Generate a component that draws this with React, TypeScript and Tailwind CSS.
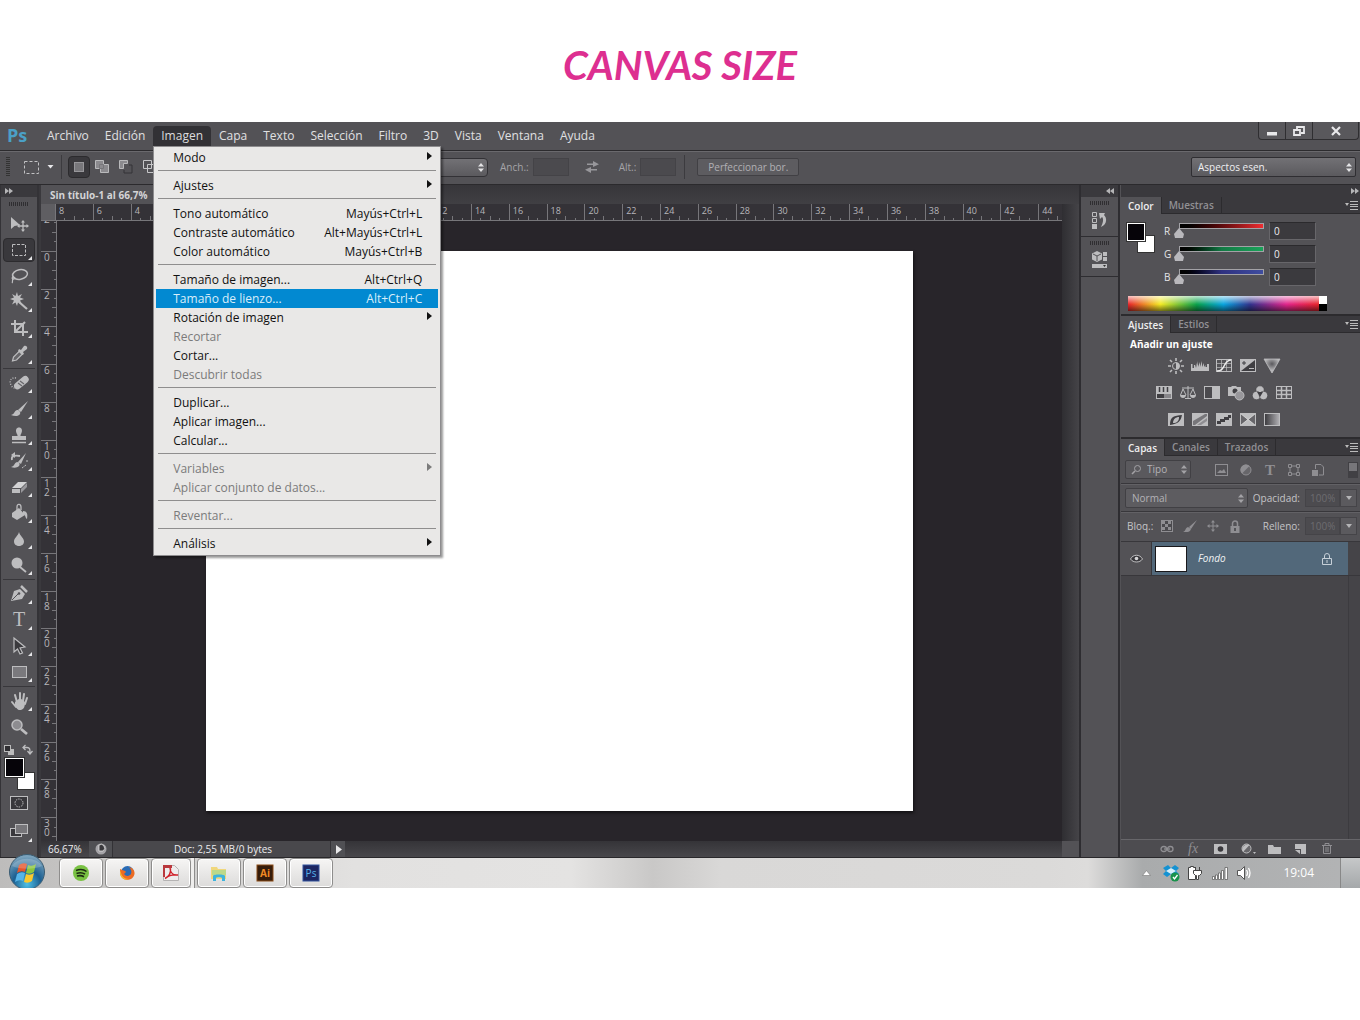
import React from "react";

const FONT = "font-['Open_Sans','Noto_Sans',sans-serif]";

type MenuRow =
  | { sep: true }
  | { sep?: false; label: string; keys?: string; sub?: boolean; off?: boolean; hot?: boolean };

const imageMenu: MenuRow[] = [
  { label: "Modo", sub: true },
  { sep: true },
  { label: "Ajustes", sub: true },
  { sep: true },
  { label: "Tono automático", keys: "Mayús+Ctrl+L" },
  { label: "Contraste automático", keys: "Alt+Mayús+Ctrl+L" },
  { label: "Color automático", keys: "Mayús+Ctrl+B" },
  { sep: true },
  { label: "Tamaño de imagen...", keys: "Alt+Ctrl+Q" },
  { label: "Tamaño de lienzo...", keys: "Alt+Ctrl+C", hot: true },
  { label: "Rotación de imagen", sub: true },
  { label: "Recortar", off: true },
  { label: "Cortar..." },
  { label: "Descubrir todas", off: true },
  { sep: true },
  { label: "Duplicar..." },
  { label: "Aplicar imagen..." },
  { label: "Calcular..." },
  { sep: true },
  { label: "Variables", sub: true, off: true },
  { label: "Aplicar conjunto de datos...", off: true },
  { sep: true },
  { label: "Reventar...", off: true },
  { sep: true },
  { label: "Análisis", sub: true },
];

function ImageMenu() {
  return (
    <div
      role="menu"
      className="absolute left-0 top-full z-30 -mt-px w-72 border border-[#8d8c8e] bg-[#e9e8e7] px-0.5 pb-0.5 pt-px shadow-[2px_2px_2px_#0006]"
    >
      {imageMenu.map((r, i) =>
        r.sep ? (
          <div key={i} className="h-[9px] px-0.5 pt-[3px]">
            <div className="h-px bg-[#8f8e8e]" />
          </div>
        ) : (
          <button
            key={i}
            role="menuitem"
            disabled={r.off}
            className={
              "flex h-[19px] w-full items-center justify-between pl-[17px] text-xs leading-[18px] whitespace-nowrap " +
              (r.hot ? "bg-[#0289d1] text-[#d9eefa]" : r.off ? "text-[#7b7b7b]" : "text-[#111]") +
              (r.sub ? " pr-1.5" : " pr-4")
            }
          >
            <span>{r.label}</span>
            {r.keys && <span>{r.keys}</span>}
            {r.sub && (
              <svg width="5" height="8" viewBox="0 0 5 8" className="-mt-1" fill="currentColor">
                <path d="M0 0L5 4L0 8Z" />
              </svg>
            )}
          </button>
        ),
      )}
    </div>
  );
}

const menus = ["Archivo", "Edición", "Imagen", "Capa", "Texto", "Selección", "Filtro", "3D", "Vista", "Ventana", "Ayuda"];

function MenuBar() {
  return (
    <header className="flex h-[29px] items-stretch border-b border-[#2c2b2e] bg-[#535256]">
      <div className="w-[39px] pl-[7px] font-['Open_Sans',sans-serif] text-lg font-bold leading-[27px] text-[#4ba0c6]">Ps</div>
      <nav className="flex h-[25px] items-stretch pt-1 text-xs text-[#e0e0e2]">
        {menus.map((m) => (
          <div key={m} className="relative flex">
            <button
              className={
                "h-5 rounded-t-sm px-2 leading-5 " + (m === "Imagen" ? "bg-[#323135] text-[#dcdcde]" : "")
              }
            >
              {m}
            </button>
            {m === "Imagen" && <ImageMenu />}
          </div>
        ))}
      </nav>
      <div className="ml-auto mr-px flex h-[18px] rounded-b-sm border border-t-0 border-[#2f2e31] bg-[#59585c] text-[#e8e8ea]">
        <button aria-label="Minimizar" className="flex w-[27px] items-center justify-center border-r border-[#2f2e31]">
          <svg width="12" height="12" viewBox="0 0 12 12"><path d="M1 7h10v3.500H1z" fill="currentColor" /></svg>
        </button>
        <button aria-label="Restaurar" className="flex w-[27px] items-center justify-center border-r border-[#2f2e31]">
          <svg width="14" height="12" viewBox="0 0 14 12" fill="none" stroke="currentColor" strokeWidth="1.800">
            <path d="M5 4V2h7v6H9M2 5h6v5H2z" />
          </svg>
        </button>
        <button aria-label="Cerrar" className="flex w-[45px] items-center justify-center">
          <svg width="12" height="12" viewBox="0 0 12 12" stroke="currentColor" strokeWidth="2.200">
            <path d="M2 2l8 8M10 2l-8 8" />
          </svg>
        </button>
      </div>
    </header>
  );
}

function UpDown({ className = "" }: { className?: string }) {
  return (
    <svg width="6" height="9" viewBox="0 0 6 9" fill="currentColor" className={"pointer-events-none absolute " + className}>
      <path d="M3 0L6 3.500H0zM0 5.500h6L3 9z" />
    </svg>
  );
}

function Grip() {
  return <div className="h-1 w-5 bg-[repeating-linear-gradient(90deg,#2f2e31_0_1px,transparent_1px_2px)]" />;
}

function OptionsBar() {
  const small = "text-[10px] text-[#a5a4a8]";
  return (
    <div className="flex h-[34px] items-center border-b border-[#2b2a2d] border-t border-t-[#6a696d] bg-[#535256] pb-0.5">
      <div className="ml-1.5 h-5 w-1 bg-[repeating-linear-gradient(180deg,#333_0_1px,transparent_1px_2px)]" />
      <button aria-label="Herramienta marco" className="ml-3.5 flex items-center gap-2">
        <svg width="15" height="13" viewBox="0 0 15 13" fill="none" stroke="#c2c2c4">
          <rect x=".5" y=".5" width="14" height="12" strokeDasharray="3 2" />
        </svg>
        <svg width="7" height="4" viewBox="0 0 7 4" fill="#e8e8ea"><path d="M.5 0h6l-3 3.500z" /></svg>
      </button>
      <div className="ml-[7px] h-6 w-px bg-[#3c3b3f]" />
      <button aria-label="Nueva selección" className="ml-1.5 flex h-[22px] w-[22px] items-center justify-center rounded-sm border border-[#2c2b2e] bg-[#3a393d]">
        <svg width="10" height="10" viewBox="0 0 10 10"><rect x=".5" y=".5" width="9" height="9" fill="#78777b" stroke="#98979b" /></svg>
      </button>
      <button aria-label="Añadir" className="ml-[5px]">
        <svg width="14" height="14" viewBox="0 0 14 14" fill="#8b8a8e" stroke="#b9b9bb"><path d="M.5.5h8v4h5v8h-8v-4h-5z" /><path d="M4.500 4.500h4v4h-4z" stroke="#77767a" /></svg>
      </button>
      <button aria-label="Restar" className="ml-2.5">
        <svg width="14" height="14" viewBox="0 0 14 14" fill="none"><path d="M.5.5h8v3h-4v5h-4z" fill="#8b8a8e" stroke="#b9b9bb" /><path d="M10 5h3v8H5v-3" stroke="#343337" /></svg>
      </button>
      <button aria-label="Formar intersección" className="ml-2.5">
        <svg width="14" height="14" viewBox="0 0 14 14" fill="none" stroke="#c6c6c8"><path d="M.5.5h8v8h-8zM4.500 4.500h8v8h-8z" /></svg>
      </button>
      <label className="relative ml-[206px] flex items-center">
        <select aria-label="Estilo" className="h-[19px] w-[125px] appearance-none rounded-sm border border-[#333236] bg-linear-to-b from-[#727175] to-[#5b5a5e] pl-2 text-[10px] text-[#ddd]">
          <option>Normal</option>
        </select>
        <UpDown className="right-1 text-[#e4e4e6]" />
      </label>
      <label className={"ml-3 flex items-center gap-1 " + small}>
        Anch.:
        <input disabled className="h-[18px] w-9 border border-[#444347] bg-[#4b4a4e]" />
      </label>
      <button aria-label="Intercambiar" className="ml-4">
        <svg width="14" height="12" viewBox="0 0 14 12" fill="#98979b"><path d="M2 2.500h6V0l6 3.200-6 2.800V4H2zM12 8H6V6L0 8.800 6 12V9.500h6z" /></svg>
      </button>
      <label className={"ml-5 flex items-center gap-1 " + small}>
        Alt.:
        <input disabled className="h-[18px] w-9 border border-[#444347] bg-[#4b4a4e]" />
      </label>
      <div className="ml-2 h-6 w-px bg-[#3c3b3f]" />
      <button className="ml-3 h-[18px] w-[102px] rounded-xs border border-[#414044] bg-[#5d5c60] text-[10px] leading-4 text-[#b1b0b4] whitespace-nowrap">
        Perfeccionar bor.
      </button>
      <label className="relative ml-auto mr-1 flex items-center">
        <select aria-label="Espacio de trabajo" className="h-5 w-[165px] appearance-none rounded-xs border border-[#2f2e32] bg-linear-to-b from-[#727175] to-[#5b5a5e] pl-1.5 text-[10px] text-[#f0f0f2]">
          <option>Aspectos esen.</option>
        </select>
        <UpDown className="right-1 text-[#e4e4e6]" />
      </label>
    </div>
  );
}

/* ---------- Tool palette ---------- */

const C = "#bdbdbf";
const toolGroups: { name: string; on?: boolean; single?: boolean; art: React.ReactNode }[][] = [
  [
    { name: "Mover", single: true, art: <><path d="M2 3v12l3.500-3 5.500-1z" fill={C} /><path d="M14 7v10M9 12h10" stroke={C} strokeWidth="1.300" /><path d="M14 6l2 2.500h-4zM14 18l2-2.500h-4zM8 12l2.500-2v4zM20 12l-2.500-2v4z" fill={C} /></> },
    { name: "Marco", on: true, art: <rect x="3.500" y="4.500" width="13" height="11" fill="none" stroke={C} strokeDasharray="3 1.500" /> },
    { name: "Lazo", art: <><ellipse cx="11" cy="8.500" rx="7.500" ry="4.800" transform="rotate(-10 11 8.500)" fill="none" stroke={C} strokeWidth="1.500" /><path d="M5 10c-3 1-2 4 0 3s0-3-1-1 0 4-1 5" fill="none" stroke={C} strokeWidth="1.200" /></> },
    { name: "Varita", art: <><path d="M8 0l1 4 4-2-2 3.500 4 1.500-4 1.500 2 4-4-2-1 3.500-1.500-3.500-3.500 2 2-4L1 7l4-1.500L3 2l3.500 2z" fill={C} /><path d="M10 10l8 7" stroke={C} strokeWidth="2.200" /></> },
    { name: "Recortar", art: <path d="M6 2v12h13M2 6h12v12M6 14L16 4" fill="none" stroke={C} strokeWidth="2" /> },
    { name: "Cuentagotas", art: <><path d="M3.500 17l1-4 6-6 3 3-6 6z" fill="#67666a" stroke={C} strokeWidth="1.200" /><path d="M10 5l2 1 3-4c2-1 4 1 3 3l-4 3 1 2-2 1-4-4z" fill={C} /></> },
  ],
  [
    { name: "Pincel corrector", art: <><path d="M7 5C2 4 0 8 2 12s4 3 5 2" fill="none" stroke={C} strokeDasharray="1 1.500" strokeWidth="1.400" /><rect x="4" y="6.500" width="17" height="7" rx="3.500" transform="rotate(-40 12 10)" fill={C} /><path d="M9 10l4 3M11 8l4 3" stroke="#67666a" strokeWidth="1.200" /></> },
    { name: "Pincel", art: <><path d="M19 2L9 11l3 2z" fill={C} /><path d="M8 11c2 0 4 2 3 4-2 3-6 2-9 1 4-1 3-4 6-5z" fill={C} /></> },
    { name: "Tampón", art: <><path d="M8.500 10c-3-5-1-7.500 1.500-7.500s4.500 2.500 1.500 7.500v1H17v4H3v-4h5.500z" fill={C} /><path d="M3 17.500h14" stroke={C} strokeWidth="1.500" /></> },
    { name: "Pincel de historia", art: <><path d="M17 2l-8 9 3 2zM8 11c3 0 3 3 2 4-2 2-5 2-8 1 4-1 3-4 6-5z" fill={C} /><path d="M3 9c-1-4 2-5 8-4" fill="none" stroke={C} strokeWidth="1.800" /><path d="M6 1v6L2 4z" fill={C} /><path d="M18 9v3M17 14l-4 3" stroke={C} strokeDasharray="2 1" /></> },
    { name: "Borrador", art: <><path d="M3 11l6-6h9l-6 6z" fill="#d3d3d5" /><path d="M3 12h8v4H3z" fill={C} /><path d="M12 12l6-6v4l-6 6z" fill="#98979b" /></> },
    { name: "Bote de pintura", art: <><path d="M3 10l7-5 6 7-8 5-5-3z" fill={C} /><path d="M8 11V4c0-4 4-3 4 0v3" fill="none" stroke={C} strokeWidth="1.300" /><path d="M14 8c4 0 5 3 4 8-2-1-1-4-4-5z" fill={C} /></> },
    { name: "Desenfocar", art: <path d="M10 3c1 4 5 6 5 9.500 0 6-10 6-10 0C5 9 9 7 10 3z" fill={C} /> },
    { name: "Sobreexponer", art: <><circle cx="8" cy="8" r="5.500" fill={C} /><path d="M11 12l6 5" stroke={C} strokeWidth="1.800" /></> },
  ],
  [
    { name: "Pluma", art: <><path d="M2 17l3-10 6-2 5 5-3 5z" fill={C} /><path d="M12 2l6 6" stroke={C} strokeWidth="2.500" /><path d="M3 16l6-6" stroke="#535256" /><circle cx="10" cy="9.500" r="1.300" fill="#535256" /></> },
    { name: "Texto", art: <text x="10" y="16" textAnchor="middle" fill={C} fontFamily="Liberation Serif, serif" fontSize="20">T</text> },
    { name: "Selección de trazado", art: <path d="M5 2v14l3.500-3 2.500 5 2.500-1-2.500-5 5-1z" fill="#3a393d" stroke={C} strokeWidth="1.200" /> },
    { name: "Rectángulo", art: <rect x="3.500" y="4.500" width="14" height="11" fill="#7a797d" stroke={C} /> },
  ],
  [
    { name: "Mano", art: <><path d="M6 11l5-4 5 4c0 6-2 8-5 8s-3-2-5-4z" fill={C} /><path d="M7 16L3 11M8 11L6 4M11 10V2M14 10l1-7M16 13l2-6" stroke={C} strokeWidth="2" strokeLinecap="round" /></> },
    { name: "Zoom", single: true, art: <><circle cx="8" cy="8" r="5" fill="#8d8c90" stroke={C} strokeWidth="1.500" /><path d="M12 12l6 5" stroke={C} strokeWidth="2.800" /></> },
  ],
];

function Swatches({ size }: { size: "lg" | "md" }) {
  return (
    <div className={size === "lg" ? "relative h-8 w-[30px]" : "relative h-[30px] w-7"}>
      <button aria-label="Color de fondo" className="absolute bottom-0 right-0 h-[18px] w-[18px] border border-[#333] bg-white" />
      <button aria-label="Color frontal" className={"absolute left-0 top-0 border border-white bg-[#060409] outline outline-[#333] " + (size === "lg" ? "h-[19px] w-[19px]" : "h-[18px] w-[18px]")} />
    </div>
  );
}

function ToolPalette() {
  return (
    <aside className="flex w-[39px] shrink-0 flex-col border-r-2 border-l border-[#343337] bg-[#535256]">
      <div className="flex h-3 items-center bg-[#3a393d] pl-1">
        <Chevrons />
      </div>
      <div className="flex h-3.5 items-center justify-center"><Grip /></div>
      {toolGroups.map((g, gi) => (
        <div key={gi} className="flex flex-col items-center">
          {gi > 0 && <div className="flex h-[3px] w-full items-center px-0.5"><div className="h-px w-full bg-[#38373b]" /></div>}
          {g.map((t) => (
            <div key={t.name} className="flex h-[26px] items-center">
              <button
                aria-label={t.name}
                className={
                  "relative flex h-6 w-8 items-center justify-center rounded-sm border " +
                  (t.on ? "border-[#2c2b2e] bg-[#39383c]" : "border-transparent")
                }
              >
                <svg width="20" height="20" viewBox="0 0 20 20">{t.art}</svg>
                {!t.single && (
                  <svg width="4" height="4" viewBox="0 0 4 4" className="absolute bottom-px right-0.5"><path d="M4 0v4H0z" fill="#e6e6e8" /></svg>
                )}
              </button>
            </div>
          ))}
        </div>
      ))}
      <div className="flex h-[18px] items-center justify-between pl-[3px] pr-1 pt-px">
        <svg width="10" height="10" viewBox="0 0 10 10"><path d="M4 4h6v6H4z" fill="#bbb" /><rect x=".5" y=".5" width="6" height="6" fill="#2f2e32" stroke="#bbb" /></svg>
        <svg width="11" height="11" viewBox="0 0 11 11" fill="none" stroke={C} strokeWidth="1.300"><path d="M1 3.500h4c3 0 3 2 3 5M3.500 1L1 3.500 3.500 6M5.500 7L8 10l2.500-3" /></svg>
      </div>
      <div className="pl-1"><Swatches size="lg" /></div>
      <button aria-label="Máscara rápida" className="mx-auto mt-1.5">
        <svg width="18" height="14" viewBox="0 0 18 14" fill="none" stroke={C}><rect x=".5" y=".5" width="17" height="13" fill="#39383c" /><circle cx="9" cy="7" r="4" strokeDasharray="1.500 1" /></svg>
      </button>
      <button aria-label="Modo de pantalla" className="relative mx-auto mt-3.5">
        <svg width="18" height="14" viewBox="0 0 18 14" stroke={C}><rect x=".5" y="4.500" width="11" height="8" fill="#39383c" /><rect x="5.500" y=".5" width="12" height="9" fill="#77767a" /></svg>
        <svg width="4" height="4" viewBox="0 0 4 4" className="absolute -bottom-1 -right-1"><path d="M4 0v4H0z" fill="#e6e6e8" /></svg>
      </button>
    </aside>
  );
}

function Chevrons({ left = false }: { left?: boolean }) {
  return (
    <svg width="8" height="6" viewBox="0 0 8 6" fill="#b5b5b7" className={left ? "rotate-180" : ""}>
      <path d="M0 0l4 3-4 3zM4 0l4 3-4 3z" />
    </svg>
  );
}

/* ---------- Document ---------- */

const hNums = [8, 6, 4, 2, 0, ...Array.from({ length: 22 }, (_, i) => 2 + i * 2)];
const vNums = [2, ...Array.from({ length: 16 }, (_, i) => i * 2)];

function HRuler() {
  return (
    <div className="flex h-[17px] overflow-hidden border-b border-[#77767a] bg-[#343237] text-[9px] text-[#b7b6ba]">
      <div className="w-3.5 shrink-0 bg-[#5f5e62]" />
      <div className="grid w-[1021px] shrink-0 grid-cols-[repeat(27,minmax(0,1fr))]">
        {hNums.map((n, i) => (
          <div key={i} className="relative flex items-end border-l border-[#77767a]">
            <span className="absolute left-[3px] top-0 leading-[13px]">{n}</span>
            <i className="h-1 flex-1" />
            <i className="h-0.5 flex-1 border-l border-[#77767a]" />
            <i className="h-1 flex-1 border-l border-[#77767a]" />
            <i className="h-0.5 flex-1 border-l border-[#77767a]" />
          </div>
        ))}
      </div>
    </div>
  );
}

function VRuler() {
  return (
    <div className="w-4 shrink-0 overflow-hidden border-r border-[#77767a] bg-[#343237] text-[10px] text-[#b7b6ba]">
      <div className="-mb-3.5 -mt-2 grid h-[642px] grid-rows-[repeat(17,minmax(0,1fr))]">
        {vNums.map((n, i) => (
          <div key={i} className="relative flex flex-col items-end border-t border-[#77767a]">
            <span className="absolute left-[3px] top-px flex flex-col leading-[9px]">
              {String(n).split("").map((d, k) => <b key={k} className="font-normal">{d}</b>)}
            </span>
            <i className="w-1 flex-1" />
            <i className="w-0.5 flex-1 border-t border-[#77767a]" />
            <i className="w-1 flex-1 border-t border-[#77767a]" />
            <i className="w-0.5 flex-1 border-t border-[#77767a]" />
          </div>
        ))}
      </div>
    </div>
  );
}

function DocumentWindow() {
  return (
    <main className="flex min-w-0 flex-1 flex-col bg-[#3a393d] pl-0.5">
      <div className="flex h-[19px] bg-linear-to-b from-[#37363a] to-[#403f43]">
        <button className="w-60 bg-[#535256] pl-[9px] text-left text-[10px] font-bold leading-5 text-[#d4d4d6] whitespace-nowrap">
          Sin título-1 al 66,7%
        </button>
      </div>
      <div className="flex min-h-0 flex-1">
        <div className="flex min-w-0 flex-1 flex-col">
          <HRuler />
          <div className="flex flex-1 bg-[#28252a]">
            <VRuler />
            <div className="min-w-0 flex-1 overflow-hidden pb-[30px] pl-[149px] pt-[30px]">
              <div className="h-[560px] w-[707px] bg-white shadow-[1px_2px_3px_#0008]" />
            </div>
          </div>
        </div>
        <div className="w-[17px] shrink-0 bg-linear-to-r from-[#2f2e32] to-[#454448]" />
      </div>
      <div className="flex h-4 items-stretch bg-linear-to-b from-[#353438] to-[#48474b] text-[10px] leading-4 text-[#ededef]">
        <span className="w-12 pl-[7px]">66,67%</span>
        <button aria-label="Estado" className="flex w-6 items-center justify-center border-r border-[#333236] bg-[#505054]">
          <svg width="12" height="12" viewBox="0 0 12 12"><circle cx="6" cy="6" r="5.500" fill="#a5a4a8" /><path d="M4 2v6h4a3 3 0 0 0-4-6" fill="#39383c" stroke="#eee" strokeWidth=".7" /></svg>
        </button>
        <span className="w-[218px] border-r border-[#333236] bg-[#49484c] pl-[61px]">Doc: 2,55 MB/0 bytes</span>
        <button aria-label="Más información" className="flex w-3.5 items-center justify-center bg-[#505054]">
          <svg width="7" height="9" viewBox="0 0 7 9"><path d="M1 0l6 4.500L1 9z" fill="#e8e8ea" /></svg>
        </button>
        <span className="ml-auto w-[17px] bg-[#535256]" />
      </div>
    </main>
  );
}

/* ---------- Right side ---------- */

function IconStrip() {
  return (
    <aside className="flex w-[41px] shrink-0 flex-col border-l-2 border-r-2 border-[#2e2d31] bg-[#535256]">
      <div className="flex h-3 items-center justify-end bg-[#3a393d] pr-1"><Chevrons left /></div>
      <div className="flex h-10 flex-col items-center border-b border-[#2e2d31] pt-1">
        <Grip />
        <button aria-label="Historia" className="mt-1.5">
          <svg width="15" height="18" viewBox="0 0 15 18" fill="none" stroke={C}><path d="M.5 1.500h4v4h-4zM.5 7.500h4v4h-4z" /><path d="M0 13h5v5H0z" fill={C} stroke="none" /><path d="M7 2h6l-1 2c4 4 2 10-3 12 2-4 3-8 1-10L8 8z" fill={C} stroke="none" /></svg>
        </button>
      </div>
      <div className="flex h-10 flex-col items-center border-b border-[#2e2d31] pt-1">
        <Grip />
        <button aria-label="Propiedades" className="mt-1.5">
          <svg width="16" height="18" viewBox="0 0 16 18"><path d="M5 0l5 2.500v6L5 11 0 8.500v-6z" fill={C} /><path d="M1 3l4 2 4-2M5 5v5" stroke="#535256" fill="none" /><path d="M11 1h4v4h-4zM11 6h4v4h-4zM0 13h15v4H0z" fill={C} /><path d="M11 14h3l-1.500 2z" fill="#333" /></svg>
        </button>
      </div>
    </aside>
  );
}

function Tabs({ items }: { items: string[] }) {
  return (
    <div className="flex h-[17px] items-stretch bg-[#3a393d] text-[10px] font-semibold leading-4">
      {items.map((t, i) => (
        <button key={t} className={"border-r border-[#2c2b2e] px-[7px] " + (i === 0 ? "bg-[#535256] text-[#eeeeef]" : "border-b text-[#919094]")}>
          {t}
        </button>
      ))}
      <span className="flex-1 border-b border-[#2c2b2e]" />
      <button aria-label="Opciones del panel" className="border-b border-[#2c2b2e] pr-0.5">
        <svg width="13" height="9" viewBox="0 0 13 9"><path d="M0 2h4L2 5z" fill="#bbb" /><path d="M5 .5h8M5 3.500h8M5 5.500h8M5 8.500h8" stroke="#bbb" /></svg>
      </button>
    </div>
  );
}

const channels = [
  { k: "R", bar: "bg-linear-to-r from-black to-[#ee2c31]" },
  { k: "G", bar: "bg-linear-to-r from-black via-[#137a45] to-[#1aa35a]" },
  { k: "B", bar: "bg-linear-to-r from-black via-[#2f3180] to-[#3f4da0]" },
];

function ColorPanel() {
  return (
    <section>
      <Tabs items={["Color", "Muestras"]} />
      <div className="h-[100px] pl-1.5 pt-[7px]">
        <div className="flex">
          <div className="pt-0.5"><Swatches size="md" /></div>
          <div className="ml-2 flex flex-col gap-[3px]">
            {channels.map((c) => (
              <div key={c.k} className="flex h-5 items-center text-[10px] text-[#e6e6e8]">
                <label htmlFor={"ch" + c.k} className="w-4 pl-px leading-4">{c.k}</label>
                <div className="relative h-4 w-[85px]">
                  <div className={"h-1.5 border border-[#a3a2a6] " + c.bar} />
                  <input
                    id={"ch" + c.k}
                    type="range"
                    min={0}
                    max={255}
                    defaultValue={0}
                    className="absolute -left-[5px] top-1 h-3 w-[95px] appearance-none bg-transparent [&::-webkit-slider-thumb]:h-2.5 [&::-webkit-slider-thumb]:w-2.5 [&::-webkit-slider-thumb]:appearance-none [&::-webkit-slider-thumb]:bg-[#b9b8bc] [&::-webkit-slider-thumb]:[clip-path:polygon(50%_0,100%_60%,90%_100%,10%_100%,0_60%)]"
                  />
                </div>
                <input aria-label={"Valor " + c.k} defaultValue="0" className="ml-[5px] h-[18px] w-[47px] border border-[#67666a] border-t-[#2b2a2d] bg-[#3b3a3e] px-1 text-[10px] text-[#ededef]" />
              </div>
            ))}
          </div>
        </div>
        <div className="ml-px mt-[9px] flex h-[15px] w-[199px]">
          <div className="flex-1 bg-[linear-gradient(180deg,#fffb_0%,transparent_55%,#0008_100%),linear-gradient(90deg,#e8252b,#f4ea25_17%,#0aa24b_36%,#0aa5e0_50%,#33348e_64%,#e2268c_83%,#e8252b)]" />
          <div className="w-2"><div className="h-2 bg-white" /><div className="h-[7px] bg-black" /></div>
        </div>
      </div>
    </section>
  );
}

const D = "#3f3e42";
const frame = <rect x=".5" y="1.500" width="15" height="12" fill="none" stroke={C} />;
const solid = <rect x="0" y="1" width="16" height="13" fill={C} />;
const adjustments: [string, React.ReactNode][][] = [
  [
    ["Brillo", <><circle cx="8" cy="8" r="3.500" fill="none" stroke={C} /><path d="M8 4.500a3.500 3.500 0 0 1 0 7z" fill={C} /><path d="M8 0v3M8 13v3M0 8h3M13 8h3M2 2l2 2M12 12l2 2M2 14l2-2M12 4l2-2" stroke={C} strokeWidth="1.600" /></>],
    ["Niveles", <path d="M-1 13V6h1.500v4H2V7h1v3l1.500-5v5L6 3v6l2-5v5l2-6v6l2-4v4l1.500-2v2H15V6h2v7z" fill={C} />],
    ["Curvas", <>{frame}<path d="M5.500 2v11M10.500 2v11M1 5.500h14M1 9.500h14" stroke={C} strokeOpacity=".7" /><path d="M1 13c9 0 6-11 14-11" stroke="#eee" fill="none" strokeWidth="1.500" /></>],
    ["Exposición", <>{solid}<path d="M1 13L15 2v11z" fill={D} /><path d="M2 5h4M4 3v4" stroke={D} /><path d="M9 10.500h5" stroke={C} /></>],
    ["Intensidad", <><defs><radialGradient id="vib" cy=".35"><stop stopColor="#5a595d" /><stop offset="1" stopColor="#bdbdbf" /></radialGradient></defs><path d="M0 1h16L8 15z" fill="url(#vib)" stroke={C} strokeWidth=".8" /></>],
  ],
  [
    ["Tono", <>{solid}<path d="M3.500 2v5M7.500 2v5M11.500 2v5" stroke={D} strokeWidth="1.500" /><path d="M1 9h7v4H1z" fill={D} /><path d="M8 9h7v4H8z" fill="#87868a" /></>],
    ["Equilibrio", <><path d="M8 1v12M2 3h12M5 13.500h6M3 4L.5 10M3 4l3 6M13 4l-3 6M13 4l2.500 6" stroke={C} fill="none" /><path d="M0 10h6c0 4-6 4-6 0M10 10h6c0 4-6 4-6 0" fill={C} /></>],
    ["Blanco y negro", <>{frame}<path d="M8 2h7v11H8z" fill={C} /><path d="M1 2h7v11H1z" fill="#4b4a4e" /></>],
    ["Filtro de fotografía", <><path d="M0 2h3l1-1h4l1 1h4v9H0z" fill={C} /><circle cx="7" cy="6" r="2.500" fill={D} /><circle cx="11.500" cy="10.500" r="4.500" fill="#98979b" stroke={C} /></>],
    ["Mezclador", <><g fill={C} stroke={D} strokeWidth=".6"><circle cx="8" cy="5" r="4.200" /><circle cx="4.500" cy="10.500" r="4.200" /><circle cx="11.500" cy="10.500" r="4.200" /></g><path d="M5 7l6 0-3 5z" fill={D} /></>],
    ["Consulta", <>{frame}<path d="M5.500 2v11M10.500 2v11M1 5.500h14M1 9.500h14" stroke={C} strokeWidth="1.500" /></>],
  ],
  [
    ["Invertir", <>{solid}<path d="M2 13c0-9 4-9 12-10-1 6-4 9-12 10" fill={D} /><path d="M5 11c4 0 6-2 6-6-3 0-6 2-6 6" fill={C} /></>],
    ["Posterizar", <>{solid}<path d="M1 9L13 2h2v2L3 13H1z" fill="#77767a" /><path d="M5 13l10-7v3l-6 4z" fill="#8f8e92" /></>],
    ["Umbral", <>{solid}<path d="M1 9h3V7h4V5h4V3h3v3h-2v2H9v2H5v2H1z" fill={D} /></>],
    ["Corrección selectiva", <>{solid}<path d="M1 2l6.500 5.500L1 13zM15 2L8.500 7.500 15 13z" fill="#67666a" /><path d="M1 2l14 11M15 2L1 13" stroke="#ddd" strokeWidth=".7" /></>],
    ["Mapa de degradado", <><defs><linearGradient id="gm"><stop stopColor="#39383c" /><stop offset="1" stopColor="#b3b2b6" /></linearGradient></defs><rect x=".5" y="1.500" width="15" height="12" fill="url(#gm)" stroke={C} /></>],
  ],
];

function AdjustPanel() {
  return (
    <section className="border-t-2 border-[#2c2b2e]">
      <Tabs items={["Ajustes", "Estilos"]} />
      <div className="flex h-[104px] flex-col pt-[3px]">
        <h2 className="pl-[9px] text-[10px] font-bold leading-4 text-white">Añadir un ajuste</h2>
        <div className="flex w-[206px] flex-col gap-[11px] pt-1.5">
          {adjustments.map((row, i) => (
            <div key={i} className="flex justify-center gap-2">
              {row.map(([name, art]) => (
                <button key={name} aria-label={name} className="h-4 w-4">
                  <svg width="16" height="16" viewBox="0 0 16 16" overflow="visible">{art}</svg>
                </button>
              ))}
            </div>
          ))}
        </div>
      </div>
    </section>
  );
}

const G = "#8f8e92";

function Percent({ label }: { label: string }) {
  return (
    <label className="ml-auto flex items-center gap-[5px] text-[10px] text-[#c4c4c6]">
      {label}
      <span className="flex">
        <input disabled defaultValue="100%" className="h-[18px] w-[35px] border border-[#454448] bg-[#4c4b4f] px-1 text-[10px] text-[#6d6c70]" />
        <span className="flex h-[18px] w-[17px] items-center justify-center border border-[#454448] bg-[#5b5a5e]">
          <svg width="6" height="4" viewBox="0 0 6 4"><path d="M0 0h6L3 4z" fill="#b4b4b6" /></svg>
        </span>
      </span>
    </label>
  );
}

function LayersPanel() {
  return (
    <section className="flex flex-1 flex-col border-t-2 border-[#2c2b2e]">
      <Tabs items={["Capas", "Canales", "Trazados"]} />
      <div className="flex h-7 items-center border-b border-[#38373b] pl-1">
        <label className="relative flex items-center">
          <svg width="11" height="11" viewBox="0 0 11 11" className="absolute left-1.5" fill="none" stroke="#a3a2a6"><circle cx="6.500" cy="4.500" r="3" /><path d="M4 7L1 10" strokeWidth="1.600" /></svg>
          <select aria-label="Filtro" className="h-[19px] w-[66px] appearance-none rounded-xs border border-[#414044] bg-[#5a595d] pl-[21px] text-[10px] text-[#b3b2b6]">
            <option>Tipo</option>
          </select>
          <UpDown className="right-1 text-[#a3a2a6]" />
        </label>
        <div className="ml-6 flex items-center gap-3">
          <button aria-label="Píxel"><svg width="13" height="12" viewBox="0 0 13 12"><rect x=".5" y=".5" width="12" height="11" fill="none" stroke={G} /><path d="M2 9l3-3 2 1 2-2 2 4z" fill={G} /></svg></button>
          <button aria-label="Ajuste"><svg width="12" height="12" viewBox="0 0 12 12"><circle cx="6" cy="6" r="5" fill="#67666a" stroke={G} /><path d="M2 9.500A5 5 0 0 1 9.500 2z" fill={G} /></svg></button>
          <button aria-label="Texto"><svg width="12" height="12" viewBox="0 0 12 12"><text x="6" y="11" textAnchor="middle" fontFamily="Liberation Serif, serif" fontWeight="bold" fontSize="15" fill={G}>T</text></svg></button>
          <button aria-label="Forma"><svg width="12" height="12" viewBox="0 0 12 12" fill="none" stroke={G}><path d="M2 2h8v8H2z" /><path d="M.5.5h3v3h-3zM8.500.5h3v3h-3zM.5 8.500h3v3h-3zM8.500 8.500h3v3h-3z" fill="#535256" /></svg></button>
          <button aria-label="Objeto inteligente"><svg width="12" height="12" viewBox="0 0 12 12"><path d="M3.500 5V.5H9L11.500 3v8H7" fill="none" stroke={G} /><path d="M0 6h6v6H0z" fill={G} /></svg></button>
        </div>
        <button aria-label="Activar filtro" className="ml-auto mr-0.5 flex h-4 w-2.5 items-start border border-[#414044] bg-[#414044]"><span className="h-2 w-full bg-[#77767a]" /></button>
      </div>
      <div className="flex h-7 items-center border-b border-t border-b-[#38373b] border-t-[#626165] pl-1 pr-[3px]">
        <label className="relative flex items-center">
          <select aria-label="Modo de fusión" className="h-5 w-[123px] appearance-none rounded-xs border border-[#414044] bg-[#5d5c60] pl-1.5 text-[10px] text-[#b3b2b6]">
            <option>Normal</option>
          </select>
          <UpDown className="right-1 text-[#a3a2a6]" />
        </label>
        <Percent label="Opacidad:" />
      </div>
      <div className="flex h-[30px] items-center border-b border-t border-b-[#38373b] border-t-[#626165] pb-0.5 pl-1.5 pr-[3px] text-[10px] text-[#c4c4c6]">
        Bloq.:
        <div className="ml-2 flex items-center gap-2.5">
          <button aria-label="Bloquear transparencia"><svg width="12" height="12" viewBox="0 0 12 12"><rect x=".5" y=".5" width="11" height="11" fill="#4b4a4e" stroke={G} /><path d="M1 1h3v3H1zM7 1h3v3H7zM4 4h3v3H4zM1 7h3v3H1zM7 7h3v3H7z" fill={G} /></svg></button>
          <button aria-label="Bloquear píxeles"><svg width="14" height="13" viewBox="0 0 14 13" fill={G}><path d="M14 0L6 7l2 2zM5 7l3 2c-1 4-5 3-8 3 3-1 2-4 5-5z" /></svg></button>
          <button aria-label="Bloquear posición"><svg width="12" height="12" viewBox="0 0 12 12" fill={G}><path d="M6 0l2 2.500H4zM6 12l2-2.500H4zM0 6l2.500-2v4zM12 6L9.500 4v4z" /><path d="M6 2v8M2 6h8" stroke={G} /></svg></button>
          <button aria-label="Bloquear todo"><svg width="12" height="13" viewBox="0 0 12 13"><path d="M3.500 6V3.500a2.500 2.500 0 0 1 5 0V6" fill="none" stroke={G} strokeWidth="1.500" /><path d="M1.500 6h9v7h-9z" fill={G} /><path d="M6 8v3" stroke="#414044" strokeWidth="1.500" /></svg></button>
        </div>
        <Percent label="Relleno:" />
      </div>
      <div className="flex h-[34px] border-b border-[#38373b] bg-[#535256]">
        <button aria-label="Visibilidad" className="flex w-[31px] items-center justify-center border-r border-[#38373b]">
          <svg width="13" height="9" viewBox="0 0 13 9"><path d="M.5 5C3 0 10 0 12.500 5 10 9 3 9 .5 5z" fill="#39383c" stroke="#c0c0c2" /><circle cx="6.500" cy="4.500" r="1.800" fill="#d6d6d8" /></svg>
        </button>
        <div className="flex flex-1 items-center bg-[#52687a] pl-[3px] pr-4">
          <div className="h-[26px] w-8 border border-[#19181b] bg-white" />
          <span className="ml-[11px] text-[10px] italic text-[#eef1f3]">Fondo</span>
          <svg width="10" height="12" viewBox="0 0 10 12" className="ml-auto" fill="none" stroke="#c7d0d8"><path d="M2.500 5V3a2.500 2.500 0 0 1 5 0v2M.5 5.500h9v6h-9zM5 7v3" /></svg>
        </div>
        <div className="w-3 bg-[#454448]" />
      </div>
      <div className="flex flex-1 bg-[#464549]">
        <div className="ml-auto w-3 border-l border-[#3c3b3f] bg-[#454448]" />
      </div>
      <div className="flex h-[18px] items-center gap-3.5 border-t border-[#67666a] bg-[#4d4c50] pl-[39px]">
        <button aria-label="Enlazar"><svg width="14" height="8" viewBox="0 0 14 8" fill="none" stroke={G} strokeWidth="1.300"><rect x="1" y="1.500" width="5.500" height="5" rx="2.500" /><rect x="7.500" y="1.500" width="5.500" height="5" rx="2.500" /><path d="M4 4h6" /></svg></button>
        <button aria-label="Efectos" className="w-3 text-left font-['Liberation_Serif',serif] text-sm italic leading-4 text-[#8f8e92]">fx</button>
        <button aria-label="Máscara"><svg width="13" height="10" viewBox="0 0 13 10"><path d="M0 0h13v10H0z" fill={C} /><circle cx="6.500" cy="5" r="2.800" fill="#39383c" /></svg></button>
        <button aria-label="Nuevo ajuste"><svg width="15" height="11" viewBox="0 0 15 11"><circle cx="5.500" cy="5.500" r="4.500" fill="#67666a" stroke={C} /><path d="M2 9A5 5 0 0 1 8.500 2z" fill={C} /><path d="M12 9h3l-1.500 2z" fill={C} /></svg></button>
        <button aria-label="Grupo" className="-ml-0.5"><svg width="13" height="10" viewBox="0 0 13 10"><path d="M0 1h5l1 2h7v7H0z" fill={C} /></svg></button>
        <button aria-label="Capa nueva"><svg width="11" height="10" viewBox="0 0 11 10"><path d="M0 0h11v10H6V5H0z" fill={C} /><path d="M0 6h5v4z" fill={C} /></svg></button>
        <button aria-label="Eliminar" className="ml-0.5"><svg width="10" height="11" viewBox="0 0 10 11" fill="none" stroke={G}><path d="M0 2.500h10M3 2V.5h4V2M1.500 3v7.500h7V3M4 4v5M6 4v5" /></svg></button>
      </div>
    </section>
  );
}

/* ---------- Taskbar ---------- */

const taskApps: { name: string; art: React.ReactNode }[] = [
  { name: "Spotify", art: <><circle cx="9" cy="9" r="8" fill="#79c143" /><path d="M4 6.500c4-1.500 8-1 10.500 1M4.500 9.500c3-1 6-1 8.500.700M5 12c3-.800 5-.500 7 .700" fill="none" stroke="#1b2a12" strokeWidth="1.600" /></> },
  { name: "Firefox", art: <><circle cx="9.500" cy="8.500" r="6.500" fill="#2a6bb4" /><path d="M2 5c3 2 5 1 6 3l-2 2c2 3 6 2 7 0 1-3 0-5-2-7 4 1 6 4 5.500 7C15 18 3 18 2 9z" fill="#ec6b23" /><path d="M2.500 6C3 12 6 15 11 15 6 17 2 13 2 9z" fill="#f7b52c" /></> },
  { name: "Adobe Reader", art: <><path d="M1.500 1.500h11l4 4v11h-15z" fill="#eeecec" stroke="#b5b3b3" /><path d="M1 1h9v3H3v9H1z" fill="#b9383d" /><path d="M3 14.500c4-2 6-6 5.500-10M8 4c0 4 3 8 8 7-5-.5-9 0-12 3" fill="none" stroke="#d0212a" strokeWidth="1.400" /></> },
  { name: "Explorador", art: <><path d="M1 3h6l1 2h8v10H1z" fill="#f0d77c" /><path d="M2 6h14v5H2z" fill="#bcd98a" /><path d="M3 17v-5c0-2 12-2 12 0v5h-3v-3c0-1-6-1-6 0v3z" fill="#3eb4dd" /></> },
  { name: "Illustrator", art: <><rect x="1" y="1" width="16" height="16" fill="#351c0b" stroke="#8a4b17" /><text x="9" y="13" textAnchor="middle" fontFamily="Open Sans, sans-serif" fontWeight="bold" fontSize="10" fill="#f08a24">Ai</text></> },
  { name: "Photoshop", art: <><rect x="1" y="1" width="16" height="16" fill="#1c2560" stroke="#31529c" /><text x="9" y="13" textAnchor="middle" fontFamily="Open Sans, sans-serif" fontSize="10" fill="#57b2ea">Ps</text></> },
];

function Taskbar() {
  return (
    <footer className="flex h-[30px] items-stretch bg-[linear-gradient(90deg,#bdbcbb_0,#e2e1e0_26%,#e4e3e2_42%,#c9c8c7_48%,#d9d8d7_53%,#dbdad9_77%,#dddcdb_80%,#a9abac_84%,#b3b4b5_100%)]">
      <button aria-label="Inicio" className="relative w-[58px] shrink-0">
        <svg width="38" height="34" viewBox="0 0 38 34" className="absolute -top-1 left-2">
          <defs>
            <radialGradient id="orb" cx=".5" cy=".85" r=".8"><stop stopColor="#4fc0e6" /><stop offset=".5" stopColor="#1b5f92" /><stop offset="1" stopColor="#7ba3bd" /></radialGradient>
          </defs>
          <circle cx="19" cy="18" r="17.500" fill="url(#orb)" stroke="#3b5c72" />
          <path d="M11 11q4-3 8-1l-2 8q-4-2-8 1z" fill="#e6552b" />
          <path d="M20 11q4 2 8-1l-2 8q-4 3-8 1z" fill="#8cc63f" />
          <path d="M9 20q4-3 8-1l-2 8q-4-2-8 1z" fill="#57b4e8" />
          <path d="M18 20q4 2 8-1l-2 8q-4 3-8 1z" fill="#fbc92d" />
          <path d="M4 12a16 11 0 0 1 30 0 20 8 0 0 1-30 0" fill="#fff" fillOpacity=".2" />
        </svg>
      </button>
      <div className="flex gap-0.5 pl-px">
        {taskApps.map((a, i) => (
          <React.Fragment key={a.name}>
            <button aria-label={a.name} className={"flex items-center justify-center rounded-sm border border-[#8e8d8c] bg-linear-to-b from-[#f6f5f4] to-[#dcdbda] shadow-[inset_0_0_0_1px_#fff] " + (i === 2 ? "w-10" : "w-11")}>
              <svg width="18" height="18" viewBox="0 0 18 18">{a.art}</svg>
            </button>
            {i === 2 && <span className="-ml-0.5 w-1 border-r border-[#8e8d8c] bg-[#efeeed]" />}
          </React.Fragment>
        ))}
      </div>
      <div className="ml-auto flex items-center">
        <button aria-label="Iconos ocultos"><svg width="9" height="6" viewBox="0 0 9 6"><path d="M4.500.5L8.500 5.500h-8z" fill="#fff" stroke="#777" strokeWidth=".6" /></svg></button>
        <svg width="18" height="17" viewBox="0 0 18 17" className="ml-3"><path d="M5 0L0 3l3 3-3 3 4 3 4-3 4 3 4-3-3-3 3-3-4-3-4 3z" fill="#1592d2" /><path d="M8 3l5 3-5 3-5-3z" fill="#d6effa" /><circle cx="12" cy="12" r="4.500" fill="#19934b" /><path d="M10 12l1.500 2 3-4" fill="none" stroke="#fff" strokeWidth="1.300" /></svg>
        <svg width="15" height="16" viewBox="0 0 15 16" className="ml-1.5" fill="#fff" stroke="#444"><path d="M1.500 2.500h2v-1h3v1h2v12h-7z" /><path d="M6.500 5.500h8v3l-2 2h-1v4h-2v-4h-1l-2-2zM8.500 2v3M12.500 2v3" /></svg>
        <svg width="17" height="13" viewBox="0 0 17 13" className="ml-2.5" fill="#fff" stroke="#555" strokeWidth=".7"><path d="M.5 9.500h2v3h-2zM3.500 8h2v4.500h-2zM6.500 6h2v6.500h-2zM9.500 3.500h2v9h-2zM13 .5h2.500v12H13z" /></svg>
        <svg width="14" height="14" viewBox="0 0 14 14" className="ml-2"><path d="M.5 4.500h3l4-4v13l-4-4h-3z" fill="#fff" stroke="#555" /><path d="M9.500 4q2 3 0 6M11.500 2q3 5 0 10" fill="none" stroke="#fff" strokeWidth="1.300" /></svg>
        <time className="ml-8 text-xs text-white">19:04</time>
        <button aria-label="Mostrar escritorio" className="ml-[26px] h-full w-5 border-l border-[#888] bg-linear-to-b from-[#c6c8c9] to-[#a5a8aa]" />
      </div>
    </footer>
  );
}

export default function App() {
  return (
    <div className={"min-h-screen bg-white " + FONT}>
      <h1 className="pb-[30px] pt-[38px] text-center font-['Lato',sans-serif] text-[40px] font-bold italic leading-[54px] text-[#dd2f90]">
        CANVAS SIZE
      </h1>
      <MenuBar />
      <OptionsBar />
      <div className="flex items-stretch">
        <ToolPalette />
        <DocumentWindow />
        <IconStrip />
        <aside className="flex w-60 shrink-0 flex-col bg-[#535256] pl-px">
          <div className="flex h-3 items-center justify-end bg-[#3a393d] pr-px"><Chevrons /></div>
          <ColorPanel />
          <AdjustPanel />
          <LayersPanel />
        </aside>
      </div>
      <div className="h-px bg-[#29282b]" />
      <Taskbar />
    </div>
  );
}
